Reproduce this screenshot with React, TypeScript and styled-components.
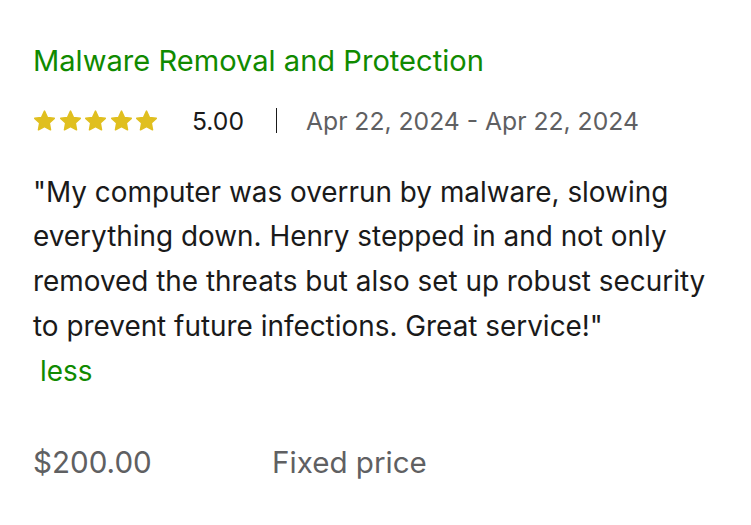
import React from "react";
import styled, { createGlobalStyle } from "styled-components";

const Global = createGlobalStyle`
  html, body { margin: 0; padding: 0; background: #ffffff; }
  body { font-family: Inter, "Liberation Sans", Arial, sans-serif; }
`;

const Card = styled.div`
  padding: 43px 33px 0 33px;
  display: flex;
  flex-direction: column;
`;

const Title = styled.h3`
  margin: 0;
  font-size: 29.1px;
  font-weight: 400;
  line-height: 36px;
  color: #108a00;
`;

const MetaRow = styled.div`
  display: flex;
  align-items: center;
  margin-top: 26.5px;
  height: 30px;
`;

const Stars = styled.div`
  display: flex;
  gap: 2.5px;
`;

const Score = styled.span`
  margin-left: 34px;
  font-size: 24.7px;
  color: #1a1a1a;
`;

const Divider = styled.span`
  width: 1px;
  height: 25px;
  background: #1a1a1a;
  margin: 0 29px 0 32px;
`;

const DateRange = styled.span`
  font-size: 24.7px;
  color: #5f6062;
`;

const Quote = styled.p`
  margin: 34.2px 0 0 0;
  font-size: 27.9px;
  line-height: 44.7px;
  color: #1a1a1a;
  max-width: 692px;
`;

const Less = styled.span`
  display: block;
  margin-left: 7px;
  color: #108a00;
`;

const PriceRow = styled.div`
  display: flex;
  margin-top: 50.9px;
  font-size: 29.6px;
  line-height: 36px;
  color: #5f6062;
`;

const Price = styled.span`
  width: 239px;
`;

const Star = () => (
  <svg width="23" height="22" viewBox="0 0 24 23">
    <path
      d="M12 1.2l3.1 6.6 7.1.9-5.2 4.9 1.3 7.1L12 17.3l-6.3 3.4 1.3-7.1-5.2-4.9 7.1-.9z"
      fill="#e0bf1f"
      stroke="#e0bf1f"
      strokeWidth="1.6"
      strokeLinejoin="round"
    />
  </svg>
);

export default function App() {
  return (
    <>
      <Global />
      <Card>
        <Title>Malware Removal and Protection</Title>
        <MetaRow>
          <Stars>
            {[0, 1, 2, 3, 4].map((i) => (
              <Star key={i} />
            ))}
          </Stars>
          <Score>5.00</Score>
          <Divider />
          <DateRange>Apr 22, 2024 - Apr 22, 2024</DateRange>
        </MetaRow>
        <Quote>
          "My computer was overrun by malware, slowing everything down. Henry
          stepped in and not only removed the threats but also set up robust
          security to prevent future infections. Great service!"
          <Less>less</Less>
        </Quote>
        <PriceRow>
          <Price>$200.00</Price>
          <span>Fixed price</span>
        </PriceRow>
      </Card>
    </>
  );
}
